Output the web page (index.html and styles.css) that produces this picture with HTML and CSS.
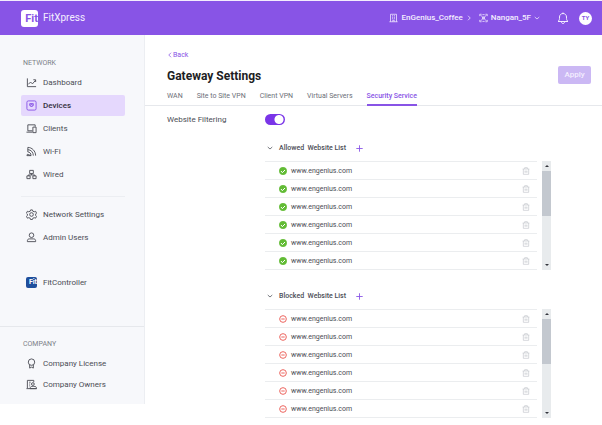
FILE: index.html
```
<!DOCTYPE html>
<html lang="en">
<head>
    <meta charset="UTF-8">
    <meta name="viewport" content="width=device-width, initial-scale=1.0">
    <title>FitXpress - Gateway Settings</title>
    <link rel="stylesheet" href="styles.css">
</head>
<body>

<svg class="sprite" aria-hidden="true">
    <symbol id="chart" viewBox="0 0 24 24"><path d="M3 3v18h19M5 16l5-5 4 4 7-8M16 6h5v5"/></symbol>
    <symbol id="device" viewBox="0 0 24 24"><rect x="2" y="2" width="20" height="20" rx="3"/><path d="M8 8h8v4h-2v2h-4v-2H8zM11 8v3M13 8v3"/></symbol>
    <symbol id="clients" viewBox="0 0 24 24"><path d="M4 17V4h16v4M1 20h13M4 17h10M15 9h7v12h-7z"/></symbol>
    <symbol id="wifi" viewBox="0 0 24 24"><path d="M4 3c9 0 17 8 17 18M4 8c7 0 12 6 12 13M4 13c4 0 7 3 7 8M3 18l8 3H2zM4 3v10"/></symbol>
    <symbol id="wired" viewBox="0 0 24 24"><path d="M8 3h8v7H8zM2 15h7v6H2zM15 15h7v6h-7zM12 10v3M5 15v-2h14v2"/></symbol>
    <symbol id="gear" viewBox="0 0 24 24"><path d="M10 2h4l1 3 3 1 3-1 2 4-2 2v3l2 2-2 4-3-1-3 1-1 3h-4l-1-3-3-1-3 1-2-4 2-2v-3L1 9l2-4 3 1 3-1z"/><circle cx="12" cy="12" r="4"/></symbol>
    <symbol id="user" viewBox="0 0 24 24"><circle cx="12" cy="7" r="5"/><path d="M3 21v-2c0-3 2-4 5-4h8c3 0 5 1 5 4v2z"/></symbol>
    <symbol id="badge" viewBox="0 0 24 24"><circle cx="12" cy="9" r="7"/><path d="M8 15v7l4-2 4 2v-7"/></symbol>
    <symbol id="owners" viewBox="0 0 24 24"><path d="M3 20V3h14v4M1 21h22M7 7h3M7 11h2M7 15h2"/><circle cx="15" cy="11" r="3"/><path d="M9 21c0-4 2-5 6-5h2c4 0 6 1 6 5z"/></symbol>
    <symbol id="building" viewBox="0 0 24 24"><path d="M4 22V2h16v20M1 22h22M8 6h3M13 6h3M8 10h3M13 10h3M8 14h3M13 14h3M10 22v-4h4v4"/></symbol>
    <symbol id="site" viewBox="0 0 24 24"><path d="M2 7V2h5M17 2h5v5M22 17v5h-5M7 22H2v-5M4 4l16 16M20 4L4 20M9 3h6M9 21h6"/><circle cx="12" cy="12" r="3"/></symbol>
    <symbol id="bell" viewBox="0 0 24 24"><path d="M12 1v2M2 19c3-2 3-5 3-9 0-4 3-7 7-7s7 3 7 7c0 4 0 7 3 9zM9 20c0 4 6 4 6 0"/></symbol>
    <symbol id="down" viewBox="0 0 24 24"><path d="M3 8l9 8 9-8"/></symbol>
    <symbol id="right" viewBox="0 0 24 24"><path d="M8 3l9 9-9 9"/></symbol>
    <symbol id="left" viewBox="0 0 24 24"><path d="M16 3l-9 9 9 9"/></symbol>
    <symbol id="plus" viewBox="0 0 24 24"><path d="M12 1v22M1 12h22"/></symbol>
    <symbol id="trash" viewBox="0 0 24 24"><path d="M2 6h20M8 6V2h8v4M4 6v16h16V6M9 11v6M12 11v6M15 11v6"/></symbol>
    <symbol id="allowed" viewBox="0 0 24 24"><circle class="fill" cx="12" cy="12" r="11"/><path class="tick" d="M6 12l4 5 8-8"/></symbol>
    <symbol id="blocked" viewBox="0 0 24 24"><circle cx="12" cy="12" r="10"/><path d="M7 12h10"/></symbol>
</svg>

<header class="topbar">
    <a class="brand" href="#"><span class="logo">Fit</span>FitXpress</a>
    <nav class="crumbs" aria-label="Location">
        <a href="#"><svg class="icon"><use href="#building"/></svg>EnGenius_Coffee</a>
        <svg class="arrow"><use href="#right"/></svg>
        <button type="button"><svg class="icon"><use href="#site"/></svg>Nangan_5F<svg class="arrow"><use href="#down"/></svg></button>
    </nav>
    <button type="button" class="bell" aria-label="Notifications"><svg><use href="#bell"/></svg></button>
    <button type="button" class="avatar">TY</button>
</header>

<div class="layout">
    <aside class="sidebar">
        <nav class="network">
            <h2>NETWORK</h2>
            <a href="#"><svg class="icon"><use href="#chart"/></svg>Dashboard</a>
            <a href="#" class="active"><svg class="icon"><use href="#device"/></svg>Devices</a>
            <a href="#"><svg class="icon"><use href="#clients"/></svg>Clients</a>
            <a href="#"><svg class="icon"><use href="#wifi"/></svg>Wi-Fi</a>
            <a href="#"><svg class="icon"><use href="#wired"/></svg>Wired</a>
            <hr>
            <a href="#"><svg class="icon"><use href="#gear"/></svg>Network Settings</a>
            <a href="#"><svg class="icon"><use href="#user"/></svg>Admin Users</a>
            <a href="#" class="controller"><span class="logo small">Fit</span>FitController</a>
        </nav>
        <nav class="company">
            <h2>COMPANY</h2>
            <a href="#"><svg class="icon"><use href="#badge"/></svg>Company License</a>
            <a href="#"><svg class="icon"><use href="#owners"/></svg>Company Owners</a>
        </nav>
    </aside>

    <main>
        <div class="page-head">
            <div>
                <a class="back" href="#"><svg><use href="#left"/></svg>Back</a>
                <h1>Gateway Settings</h1>
            </div>
            <button type="button" class="apply">Apply</button>
        </div>

        <nav class="tabs" aria-label="Settings">
            <a href="#">WAN</a>
            <a href="#">Site to Site VPN</a>
            <a href="#">Client VPN</a>
            <a href="#">Virtual Servers</a>
            <a href="#" class="active">Security Service</a>
        </nav>

        <div class="filtering">
            <label for="filtering">Website Filtering</label>
            <input type="checkbox" id="filtering" class="switch" checked>
        </div>

        <section class="sites">
            <div class="sites-head">
                <svg class="arrow"><use href="#down"/></svg>
                <h3>Allowed&nbsp; Website List</h3>
                <button type="button" aria-label="Add allowed website"><svg><use href="#plus"/></svg></button>
            </div>
            <div class="sites-body">
                <ul id="allowedList"></ul>
                <div class="scroll"><i class="up"></i><b></b><i class="dn"></i></div>
            </div>
        </section>

        <section class="sites">
            <div class="sites-head">
                <svg class="arrow"><use href="#down"/></svg>
                <h3>Blocked&nbsp; Website List</h3>
                <button type="button" aria-label="Add blocked website"><svg><use href="#plus"/></svg></button>
            </div>
            <div class="sites-body">
                <ul id="blockedList"></ul>
                <div class="scroll"><i class="up"></i><b></b><i class="dn"></i></div>
            </div>
        </section>
    </main>
</div>

<script>
    const site = "www.engenius.com";

    function fillList(id, status) {
        const list = document.getElementById(id);
        for (let i = 0; i < 6; i++) {
            list.innerHTML += `<li><svg class="${status}"><use href="#${status}"/></svg><span>${site}</span>
                <button type="button" aria-label="Delete"><svg><use href="#trash"/></svg></button></li>`;
        }
    }

    fillList("allowedList", "allowed");
    fillList("blockedList", "blocked");
</script>

</body>
</html>
```
FILE: styles.css
```
* {
    box-sizing: border-box;
}

body {
    margin: 0;
    font-family: Roboto, "Liberation Sans", sans-serif;
    font-size: 8px;
    line-height: 10px;
    color: #4b4d55;
    background-color: #ffffff;
}

a {
    color: inherit;
    text-decoration: none;
}

button {
    padding: 0;
    border: 0;
    background: none;
    font: inherit;
    color: inherit;
    cursor: pointer;
}

h1, h2, h3, ul {
    margin: 0;
    padding: 0;
}

svg {
    display: block;
    flex: none;
    fill: none;
    stroke: currentColor;
    stroke-width: 2;
}

.sprite {
    position: absolute;
    width: 0;
    height: 0;
}

.arrow {
    width: 6px;
    height: 6px;
    stroke-width: 3;
}

/* Top bar */
.topbar {
    display: flex;
    align-items: center;
    height: 35px;
    padding: 0 10px 0 21px;
    border-top: 1px solid #f3edfd;
    background-color: #8854e6;
    color: #f4eeff;
}

.brand {
    display: flex;
    align-items: center;
    gap: 5px;
    margin-right: auto;
    font-size: 10px;
}

.logo {
    width: 17px;
    height: 17px;
    border-radius: 3px;
    background-color: #ffffff;
    color: #8854e6;
    font-size: 11px;
    font-weight: 700;
    line-height: 17px;
    text-align: right;
    overflow: hidden;
}

.logo.small {
    width: 11px;
    height: 11px;
    border-radius: 2px;
    background-color: #1f4f9c;
    color: #ffffff;
    font-size: 7px;
    line-height: 11px;
}

.crumbs {
    display: flex;
    align-items: center;
    gap: 3px;
    font-weight: 500;
}

.crumbs a, .crumbs button {
    display: flex;
    align-items: center;
    gap: 3px;
}

.crumbs button {
    margin-left: 4px;
}

.crumbs .icon {
    width: 9px;
    height: 10px;
}

.bell {
    margin-left: 17px;
}

.bell svg {
    width: 12px;
    height: 12px;
}

.avatar {
    width: 13px;
    height: 13px;
    margin-left: 10px;
    border-radius: 50%;
    background-color: #ffffff;
    color: #8854e6;
    font-size: 6px;
    font-weight: 700;
}

/* Sidebar */
.layout {
    display: grid;
    grid-template-columns: 145px 1fr;
    align-items: start;
}

.sidebar {
    border-right: 1px solid #eceef2;
    background-color: #f7f8fb;
}

.sidebar nav {
    display: flex;
    flex-direction: column;
    padding: 0 19px 0 21px;
}

.sidebar h2 {
    padding-left: 2px;
    font-size: 7px;
    font-weight: 400;
    line-height: 8px;
    color: #7c7f88;
}

.sidebar a {
    display: flex;
    align-items: center;
    gap: 6px;
    height: 21px;
    padding-left: 5px;
    border-radius: 2px;
}

.sidebar .icon {
    width: 11px;
    height: 11px;
}

.sidebar .network {
    gap: 2px;
    height: 292px;
    padding-top: 24px;
    border-bottom: 1px solid #e6e8ec;
}

.network h2 {
    margin-bottom: 3px;
}

.sidebar a.active {
    background-color: #e5d8fd;
    color: #33303d;
    font-weight: 500;
}

.active .icon {
    color: #8854e6;
}

.network hr {
    width: 100%;
    height: 1px;
    margin: 9px 0 5px;
    border: 0;
    background-color: #eceef2;
}

.sidebar .controller {
    margin-top: 22px;
}

.sidebar .company {
    padding-top: 13px;
    padding-bottom: 9px;
}

.company h2 {
    margin-bottom: 5px;
}

/* Content */
.page-head {
    display: flex;
    justify-content: space-between;
    padding: 15px 11px 0 22px;
}

.back {
    display: flex;
    align-items: center;
    font-size: 7px;
    color: #8854e6;
}

.back svg {
    width: 6px;
    height: 6px;
    stroke-width: 3;
}

h1 {
    margin-top: 8px;
    font-size: 12px;
    font-weight: 700;
    line-height: 16px;
    color: #1d1e24;
}

.apply {
    width: 33px;
    height: 18px;
    margin-top: 16px;
    border-radius: 2px;
    background-color: #cbb8f4;
    color: #f4eeff;
    font-weight: 500;
}

.tabs {
    display: flex;
    gap: 14px;
    padding-left: 22px;
    border-bottom: 1px solid #e6e8ec;
    font-size: 7px;
    color: #6c6f78;
}

.tabs a {
    padding: 7px 0 3px;
    border-bottom: 2px solid transparent;
    margin-bottom: -1px;
}

.tabs a.active {
    border-color: #8854e6;
    color: #8854e6;
    font-weight: 500;
}

.filtering {
    display: grid;
    grid-template-columns: 98px auto;
    justify-content: start;
    align-items: center;
    padding: 8px 0 0 22px;
}

.switch {
    appearance: none;
    width: 20px;
    height: 11px;
    margin: 0;
    border-radius: 6px;
    background: radial-gradient(circle at 14px 50%, #ffffff 4px, transparent 5px) #7a35e8;
}

/* Website lists */
.sites {
    padding: 17px 51px 0 120px;
}

.sites + .sites {
    padding-top: 20px;
}

.sites-head {
    display: flex;
    align-items: center;
    height: 12px;
    padding-left: 2px;
}

.sites-head h3 {
    margin: 0 10px 0 6px;
    font-size: 7px;
    font-weight: 500;
}

.sites-head svg {
    stroke-width: 3;
}

.sites-head button svg {
    width: 7px;
    height: 7px;
    color: #8854e6;
}

.sites-body {
    display: flex;
    gap: 5px;
    margin-top: 7px;
}

.sites ul {
    flex: 1;
    border-top: 1px solid #ebedef;
    list-style: none;
}

.sites li {
    display: flex;
    align-items: center;
    gap: 4px;
    height: 18px;
    padding: 0 7px 0 14px;
    border-bottom: 1px solid #ebedef;
    font-size: 7px;
}

.sites li svg {
    width: 8px;
    height: 8px;
}

.sites li button {
    margin-left: auto;
    color: #c3c6cb;
}

.sites .allowed {
    color: #62bb35;
}

.sites .blocked {
    color: #ec6660;
    stroke-width: 3;
}

.fill {
    fill: currentColor;
}

.tick {
    stroke: #ffffff;
    stroke-width: 3;
}

.scroll {
    display: flex;
    flex-direction: column;
    align-items: center;
    gap: 4px;
    width: 9px;
    padding: 4px 0;
    background-color: #e8ebed;
}

.scroll b {
    width: 100%;
    height: 45px;
    background-color: #c3c8cf;
}

.scroll i {
    border: 2px solid transparent;
}

.scroll .up {
    border-top: 0;
    border-bottom-color: #33353c;
}

.scroll .dn {
    margin-top: auto;
    border-bottom: 0;
    border-top-color: #33353c;
}
```
